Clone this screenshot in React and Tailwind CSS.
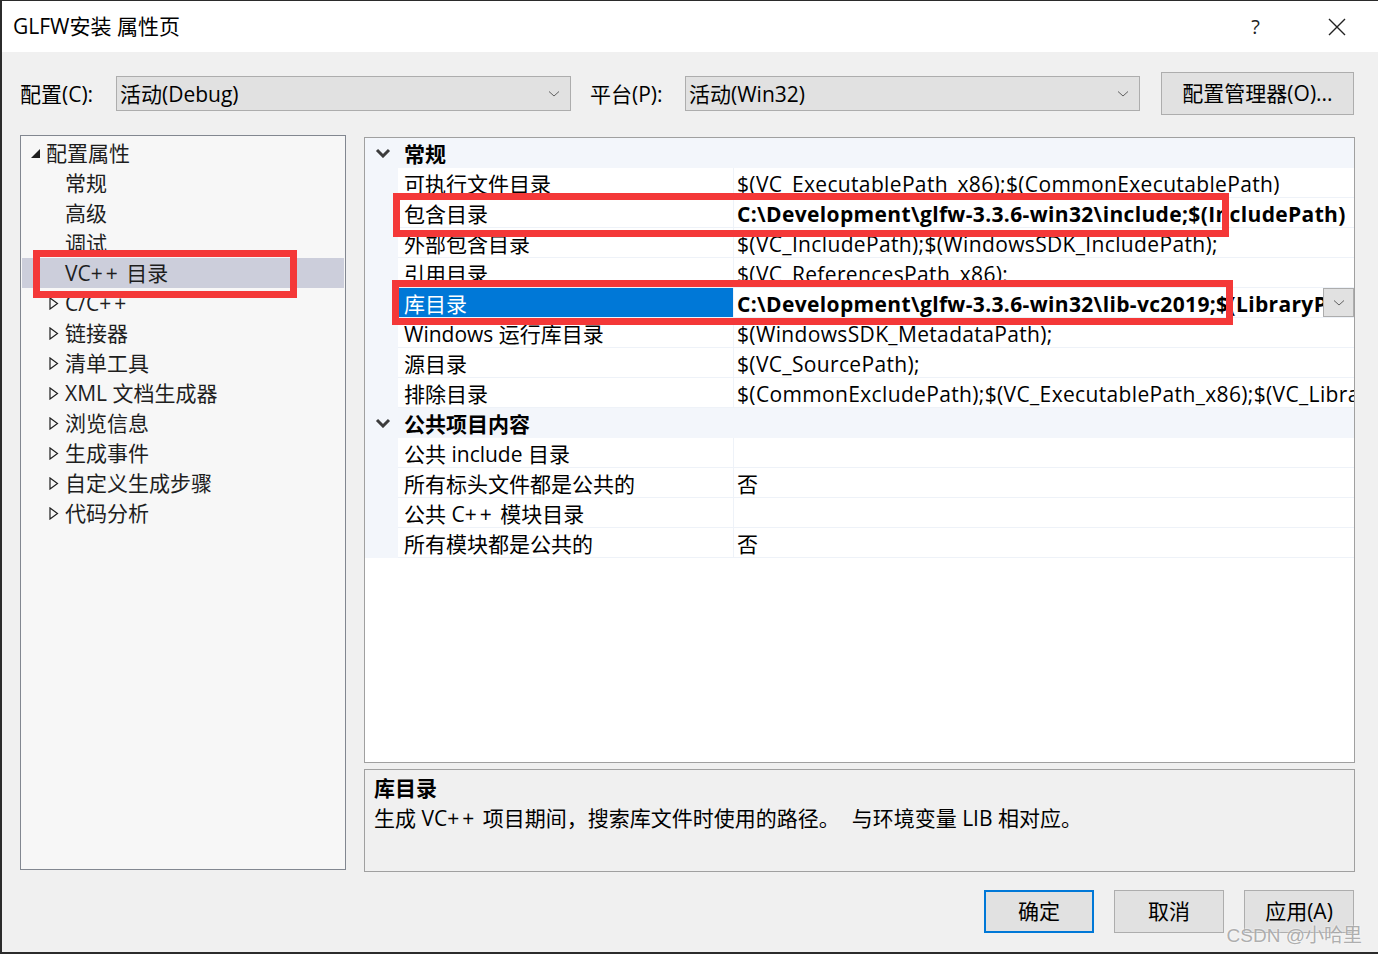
import React from "react";

const FONT = "font-['Open_Sans','Noto_Sans_CJK_SC',sans-serif]";

const Chevron = ({ className = "" }) => (
  <svg width="12" height="8" viewBox="0 0 12 8" className={className}>
    <path d="M1 1.5 L6 6 L11 1.5" fill="none" stroke="#606060" strokeWidth="1" />
  </svg>
);

// YaHei draws "+" wider than Open Sans, so space the pair out a little
const PP = () => <span className="tracking-[3px]">++</span>;

const Combo = ({ value }) => (
  <div className="w-[455px] h-[35px] bg-[#e1e1e1] border border-[#adadad] flex items-center justify-between pl-[3px] pr-[10px]">
    <span className="text-[21px] text-black leading-none pt-[2px]">{value}</span>
    <Chevron />
  </div>
);

const treeItems = [
  { label: "常规", arrow: false },
  { label: "高级", arrow: false },
  { label: "调试", arrow: false },
  { label: <>VC<PP /> 目录</>, key: "vc", arrow: false, selected: true },
  { label: <>C/C<PP /></>, key: "cpp", arrow: true },
  { label: "链接器", arrow: true },
  { label: "清单工具", arrow: true },
  { label: "XML 文档生成器", arrow: true },
  { label: "浏览信息", arrow: true },
  { label: "生成事件", arrow: true },
  { label: "自定义生成步骤", arrow: true },
  { label: "代码分析", arrow: true },
];

const general = [
  { name: "可执行文件目录", value: "$(VC_ExecutablePath_x86);$(CommonExecutablePath)" },
  { name: "包含目录", value: "C:\\Development\\glfw-3.3.6-win32\\include;$(IncludePath)", bold: true },
  { name: "外部包含目录", value: "$(VC_IncludePath);$(WindowsSDK_IncludePath);" },
  { name: "引用目录", value: "$(VC_ReferencesPath_x86);" },
  { name: "库目录", value: "C:\\Development\\glfw-3.3.6-win32\\lib-vc2019;$(LibraryPath)", bold: true, selected: true },
  { name: "Windows 运行库目录", value: "$(WindowsSDK_MetadataPath);" },
  { name: "源目录", value: "$(VC_SourcePath);" },
  { name: "排除目录", value: "$(CommonExcludePath);$(VC_ExecutablePath_x86);$(VC_LibraryPath_x86);" },
];

const shared = [
  { name: "公共 include 目录", value: "" },
  { name: "所有标头文件都是公共的", value: "否" },
  { name: <>公共 C<PP /> 模块目录</>, key: "cppmod", value: "" },
  { name: "所有模块都是公共的", value: "否" },
];

const GroupHeader = ({ title }) => (
  <div className="h-[30px] flex items-center bg-[#f3f6fb]">
    <div className="w-[33px] flex justify-center pl-[2px]">
      <svg width="16" height="10" viewBox="0 0 16 10">
        <path d="M2 2 L8 8 L14 2" fill="none" stroke="#3c3c3c" strokeWidth="3" />
      </svg>
    </div>
    <span className="pl-[6px] pt-[2px] text-[21px] font-bold text-black leading-none">{title}</span>
  </div>
);

const PropRow = ({ row }) => (
  <div className="h-[30px] flex bg-[#f3f6fb]">
    <div className="w-[33px]" />
    <div
      className={`w-[335px] flex items-center pl-[6px] pt-[3px] border-b border-[#eef2f8] ${
        row.selected ? "bg-[#0078d7] text-white" : "bg-white text-black"
      }`}
    >
      <span className="text-[21px] leading-none whitespace-nowrap">{row.name}</span>
    </div>
    <div className="flex-1 min-w-0 flex items-center bg-white border-b border-l border-[#eef2f8] pl-[3px] pt-[3px] relative overflow-hidden">
      <span
        className={`text-[21px] leading-none whitespace-nowrap text-black tracking-[0.35px] ${
          row.bold ? "font-bold" : ""
        }`}
      >
        {row.value}
      </span>
      {row.selected && (
        <div className="absolute right-0 top-0 w-[31px] h-[29px] bg-[#e1e1e1] border border-[#adadad] flex items-center justify-center">
          <Chevron />
        </div>
      )}
    </div>
  </div>
);

const Button = ({ children, primary }) => (
  <div
    className={`w-[110px] h-[43px] bg-[#e1e1e1] flex items-center justify-center text-[21px] text-black ${
      primary ? "border-2 border-[#0078d7]" : "border border-[#adadad]"
    }`}
  >
    {children}
  </div>
);

export default function App() {
  return (
    <div className={`w-[1378px] h-[954px] flex flex-col border-t border-l-2 border-b-2 border-[#2b2b2b] bg-[#f0f0f0] relative ${FONT}`}>
      {/* title bar */}
      <div className="h-[51px] bg-white flex items-center pl-[11px] shrink-0">
        <span className="text-[21px] text-black">GLFW安装 属性页</span>
        <span className="ml-auto text-[20px] text-[#222] mr-[68px]">?</span>
        <svg width="18" height="18" viewBox="0 0 18 18" className="mr-[32px]">
          <path d="M1 1 L17 17 M17 1 L1 17" stroke="#222" strokeWidth="1.4" />
        </svg>
      </div>

      {/* config row */}
      <div className="flex items-center pl-[18px] mt-[20px] h-[43px]">
        <span className="w-[96px] text-[21px] text-black pt-[2px]">配置(C):</span>
        <Combo value="活动(Debug)" />
        <span className="ml-[19px] w-[95px] text-[21px] text-black pt-[2px]">平台(P):</span>
        <Combo value="活动(Win32)" />
        <div className="ml-[21px] w-[193px] h-[43px] bg-[#e1e1e1] border border-[#adadad] flex items-center justify-center text-[21px] text-black">
          配置管理器(O)...
        </div>
      </div>

      {/* main */}
      <div className="flex mt-[20px] pl-[18px]">
        {/* tree */}
        <div className="w-[326px] h-[735px] border border-[#828790] bg-[#f7f7f7] pt-[2px] relative">
          <div className="h-[30px] flex items-center pl-[9px]">
            <svg width="11" height="11" viewBox="0 0 11 11">
              <polygon points="10,1 10,10 1,10" fill="#1e1e1e" />
            </svg>
            <span className="ml-[5px] text-[21px] text-[#1e1e1e] leading-none">配置属性</span>
          </div>
          {treeItems.map((item) => (
            <div
              key={item.key || item.label}
              className={`h-[30px] flex items-center mx-[1px] pl-[27px] ${item.selected ? "bg-[#cccedb]" : ""}`}
            >
              <div className="w-[16px]">
                {item.arrow && (
                  <svg width="10" height="13" viewBox="0 0 10 13">
                    <polygon points="1,1 8.5,6.5 1,12" fill="none" stroke="#1e1e1e" strokeWidth="1.2" />
                  </svg>
                )}
              </div>
              <span className="text-[21px] text-[#1e1e1e] leading-none whitespace-nowrap">{item.label}</span>
            </div>
          ))}
          <div className="absolute left-[12px] top-[114px] w-[264px] h-[48px] border-[7px] border-[#f43838]" />
        </div>

        {/* right column */}
        <div className="ml-[18px] w-[991px] flex flex-col">
          <div className="h-[626px] mt-[2px] border border-[#a0a0a0] bg-white relative overflow-hidden">
            <GroupHeader title="常规" />
            {general.map((r) => (
              <PropRow key={r.name} row={r} />
            ))}
            <GroupHeader title="公共项目内容" />
            {shared.map((r) => (
              <PropRow key={r.key || r.name} row={r} />
            ))}
            <div className="absolute left-[28px] top-[55px] w-[836px] h-[44px] border-[7px] border-[#f43838]" />
            <div className="absolute left-[27px] top-[142px] w-[841px] h-[45px] border-[7px] border-[#f43838]" />
          </div>
          <div className="h-[103px] mt-[6px] border border-[#a0a0a0] bg-[#f0f0f0] px-[9px] pt-[3px]">
            <div className="text-[21px] font-bold text-black leading-[30px]">库目录</div>
            <div className="text-[21px] text-black leading-[30px]">
              生成 VC<PP /> 项目期间，搜索库文件时使用的路径。
              <span className="ml-[12px]">与环境变量 LIB 相对应。</span>
            </div>
          </div>
        </div>
      </div>

      {/* buttons */}
      <div className="flex justify-end gap-[20px] pr-[24px] mt-[18px]">
        <Button primary>确定</Button>
        <Button>取消</Button>
        <Button>应用(A)</Button>
      </div>

      <div className="absolute right-[16px] bottom-[2px] text-[19px] text-[#9a9a9a]/80 font-['Liberation_Sans','Noto_Sans_CJK_SC',sans-serif] [text-shadow:0_0_2px_#ffffff]">
        CSDN @小哈里
      </div>
    </div>
  );
}
